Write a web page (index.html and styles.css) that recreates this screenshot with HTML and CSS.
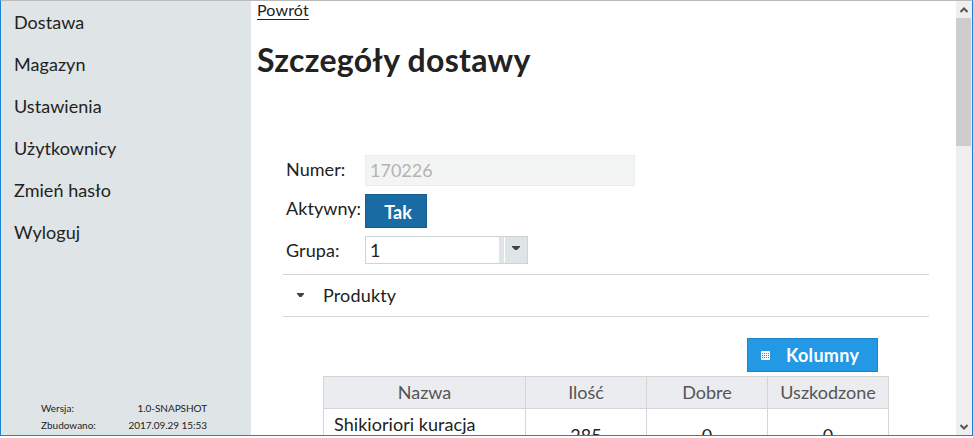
FILE: index.html
```html
<!DOCTYPE html>
<html lang="pl">
<head>
<meta charset="utf-8">
<title>Szczegóły dostawy</title>
<link rel="stylesheet" href="styles.css">
</head>
<body>
<div class="window">
  <aside class="sidebar">
    <nav class="menu">
      <a>Dostawa</a>
      <a>Magazyn</a>
      <a>Ustawienia</a>
      <a>Użytkownicy</a>
      <a>Zmień hasło</a>
      <a>Wyloguj</a>
    </nav>
    <div class="build">
      <div class="build-row"><span>Wersja:</span><span class="version">1.0-SNAPSHOT</span></div>
      <div class="build-row"><span>Zbudowano:</span><span class="date">2017.09.29 15:53</span></div>
    </div>
  </aside>
  <main class="content">
    <a class="back"><span>Powrót</span></a>
    <h1><span>Szczegóły dostawy</span></h1>
    <div class="form">
      <div class="row row-number"><label>Numer:</label><div class="input disabled">170226</div></div>
      <div class="row row-active"><label>Aktywny:</label><button class="toggle">Tak</button></div>
      <div class="row row-group"><label>Grupa:</label>
        <div class="select"><span class="value">1</span><span class="trigger"><svg width="8" height="4" viewBox="0 0 8 4"><path d="M0 0h8v1L5 4H3L0 1z" fill="#444"/></svg></span></div>
      </div>
    </div>
    <section class="panel">
      <header class="panel-head"><svg width="7" height="4" viewBox="0 0 7 4"><path d="M0 0h7v1L4.5 4h-2L0 1z" fill="#444"/></svg><span>Produkty</span></header>
      <div class="toolbar">
        <button class="columns">
          <svg width="9" height="9" viewBox="0 0 9 9"><rect width="9" height="9" rx="1" fill="#fff"/><path d="M1.500 2v6M3.500 2v6M5.500 2v6M7.500 2v6" stroke="#2399e5" stroke-dasharray="1 1"/></svg>
          <span>Kolumny</span>
        </button>
      </div>
      <div class="grid">
        <div class="th">Nazwa</div><div class="th">Ilość</div><div class="th">Dobre</div><div class="th">Uszkodzone</div>
        <div class="td name">Shikioriori kuracja</div><div class="td">285</div><div class="td">0</div><div class="td">0</div>
      </div>
    </section>
  </main>
  <div class="scrollbar">
    <span class="arrow up"><svg width="8" height="6" viewBox="0 0 8 6"><path d="M.5 5L4 1.500 7.500 5" fill="none" stroke="#555" stroke-width="2"/></svg></span>
    <span class="thumb"></span>
    <span class="arrow down"><svg width="8" height="6" viewBox="0 0 8 6"><path d="M.5 1L4 4.500 7.500 1" fill="none" stroke="#555" stroke-width="2"/></svg></span>
  </div>
</div>
</body>
</html>
```
FILE: styles.css
```css
* { box-sizing: border-box; }
body { margin: 0; background: #fff; font: 18px/24px Lato, sans-serif; color: #222; overflow: hidden; }
svg { display: block; }
button { font: inherit; margin: 0; padding: 0; }
.window { width: 973px; height: 436px; display: flex; overflow: hidden; border: 1px solid #1883d7; border-top-color: #bababa; }
.sidebar { width: 250px; flex: none; background: #dfe4e6; display: flex; flex-direction: column; justify-content: space-between; }
.menu { display: flex; flex-direction: column; padding-left: 13px; }
.menu a { height: 42px; line-height: 43px; letter-spacing: .05px; }
.build { padding: 0 44px 1px 40px; font-size: 10px; line-height: 17px; }
.build-row { display: flex; justify-content: space-between; }
.version, .date { letter-spacing: -.06px; }
.content { flex: 1; min-width: 0; padding-left: 6px; }
.back { display: flex; height: 19px; font-size: 16px; line-height: 17px; letter-spacing: .15px; }
.back span { border-bottom: 1px solid #222; height: 19px; }
h1 { margin: 20px 0 0; font-size: 32px; line-height: 40px; font-weight: 700; letter-spacing: .28px; }
.form { margin: 75px 0 0 29px; }
.row { display: flex; }
.row label { width: 79px; flex: none; white-space: nowrap; letter-spacing: .05px; }
.row-number { height: 39px; }
.row-number label { line-height: 29px; }
.row-active { height: 42px; }
.row-active label { line-height: 28px; }
.row-group { height: 28px; }
.row-group label { line-height: 29px; }
.input { width: 270px; height: 31px; padding-left: 4px; line-height: 29px; background: #f3f5f5; border: 1px solid #eceeee; color: #b3b3b3; }
.toggle { width: 62px; height: 34px; padding: 1px 0 0 4px; background: #196ca3; border: 1px solid #155d8d; color: #fff; font-weight: 700; }
.select { width: 163px; height: 28px; display: flex; border: 1px solid #d0d3d4; line-height: 27px; }
.value { width: 138px; padding-left: 4px; border-right: 5px solid #dfe4e6; }
.trigger { flex: 1; margin-left: 1px; padding: 9px 0 0 7px; background: #dfe4e6; }
.panel { margin: 10px 0 0 26px; width: 646px; }
.panel-head { height: 43px; display: flex; align-items: center; gap: 19px; padding: 0 0 2px 14px; border: solid #d5d5d5; border-width: 1px 0; letter-spacing: .15px; }
.toolbar { display: flex; justify-content: flex-end; padding: 21px 51px 4px 0; }
.columns { width: 131px; height: 34px; display: flex; align-items: center; gap: 16px; padding: 0 0 0 13px; background: #2399e5; border: 1px solid #1d86ca; color: #fff; font-weight: 700; letter-spacing: .3px; }
.grid { margin-left: 40px; width: 566px; display: grid; grid-template-columns: 202px 121px 121px 121px; grid-template-rows: 33px 54px; border-left: 1px solid #d5d5d5; }
.grid > div { border-right: 1px solid #d5d5d5; border-bottom: 1px solid #d5d5d5; text-align: center; }
.grid .th { border-top: 1px solid #d5d5d5; background: #ebecf0; color: #555; line-height: 31px; }
.td { line-height: 52px; }
.grid .name { text-align: left; padding-left: 10px; line-height: 31px; letter-spacing: .05px; }
.scrollbar { width: 16px; flex: none; background: #efefef; display: flex; flex-direction: column; }
.arrow { height: 17px; display: flex; align-items: center; padding-left: 4px; }
.thumb { width: 15px; height: 128px; background: #cdcdcd; }
.down { margin-top: auto; }
```
